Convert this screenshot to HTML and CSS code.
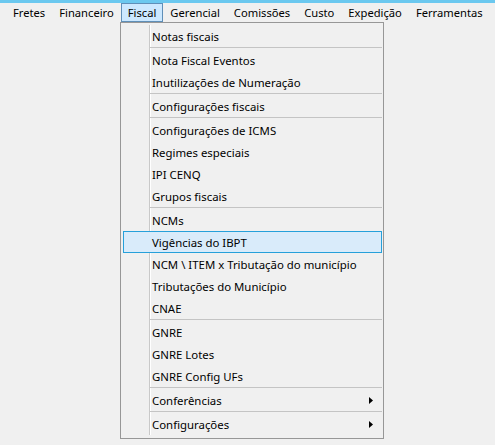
FILE: index.html
```html
<!DOCTYPE html>
<html lang="pt-BR">
<head>
<meta charset="utf-8">
<title>Menu Fiscal</title>
<link rel="stylesheet" href="styles.css">
</head>
<body>
<div class="titlebar"></div>
<nav class="menubar">
  <span class="mb-item">Fretes</span>
  <span class="mb-item">Financeiro</span>
  <span class="mb-item active">Fiscal</span>
  <span class="mb-item">Gerencial</span>
  <span class="mb-item">Comissões</span>
  <span class="mb-item">Custo</span>
  <span class="mb-item">Expedição</span>
  <span class="mb-item">Ferramentas</span>
</nav>
<div class="dropdown">
  <div class="list">
    <div class="item">Notas fiscais</div>
    <div class="sep"></div>
    <div class="item">Nota Fiscal Eventos</div>
    <div class="item">Inutilizações de Numeração</div>
    <div class="sep"></div>
    <div class="item">Configurações fiscais</div>
    <div class="sep"></div>
    <div class="item">Configurações de ICMS</div>
    <div class="item">Regimes especiais</div>
    <div class="item">IPI CENQ</div>
    <div class="item">Grupos fiscais</div>
    <div class="sep"></div>
    <div class="item">NCMs</div>
    <div class="item hot">Vigências do IBPT</div>
    <div class="item">NCM \ ITEM x Tributação do município</div>
    <div class="item">Tributações do Município</div>
    <div class="item">CNAE</div>
    <div class="sep"></div>
    <div class="item">GNRE</div>
    <div class="item">GNRE Lotes</div>
    <div class="item">GNRE Config UFs</div>
    <div class="sep"></div>
    <div class="item sub"><span>Conferências</span><svg class="arrow" width="4" height="7" viewBox="0 0 4 7"><path d="M0 0 L4 3.5 L0 7 Z" fill="#000"/></svg></div>
    <div class="sep"></div>
    <div class="item sub"><span>Configurações</span><svg class="arrow" width="4" height="7" viewBox="0 0 4 7"><path d="M0 0 L4 3.5 L0 7 Z" fill="#000"/></svg></div>
  </div>
</div>
</body>
</html>
```
FILE: styles.css
```css
html, body {
  margin: 0;
  padding: 0;
  background: #f0f0f0;
  width: 495px;
  height: 445px;
  overflow: hidden;
}
body {
  font-family: "Noto Sans", "Open Sans", sans-serif;
  font-size: 11.2px;
  color: #000;
  position: relative;
}
.titlebar {
  height: 3px;
  background: #6bc8ef;
}
.menubar {
  display: flex;
  height: 19px;
  padding-left: 6px;
}
.mb-item {
  display: flex;
  align-items: center;
  padding: 0 6px;
  border: 1px solid transparent;
  white-space: nowrap;
}
.mb-item.active {
  background: #cce8ff;
  border-color: #5f8fb8;
}
.dropdown {
  position: absolute;
  left: 120px;
  top: 22px;
  width: 262px;
  border: 1px solid #979797;
  background: #f0f0f0;
  padding: 2px 0 3px;
  font-size: 11.4px;
}
.list {
  display: flex;
  flex-direction: column;
  background: linear-gradient(to right, transparent 28px, #c9c9c9 28px, #c9c9c9 29px, #ffffff 29px, #ffffff 30px, transparent 30px);
}
.item {
  height: 20px;
  margin: 0 1px 0 2px;
  padding-left: 28px;
  padding-bottom: 1px;
  box-sizing: content-box;
  border: 1px solid transparent;
  border-bottom-width: 0;
  display: flex;
  align-items: center;
  white-space: nowrap;
}
.item.hot {
  background: #d9ebfa;
  border-color: #26a0da;
  border-bottom-width: 1px;
  padding-bottom: 0;
}
.item.sub {
  justify-content: space-between;
}
.arrow {
  margin-right: 8px;
}
.sep {
  margin: 0 1px 0 29px;
  border-top: 1px solid #c4c4c4;
  height: 0;
  padding-bottom: 1px;
}
```
